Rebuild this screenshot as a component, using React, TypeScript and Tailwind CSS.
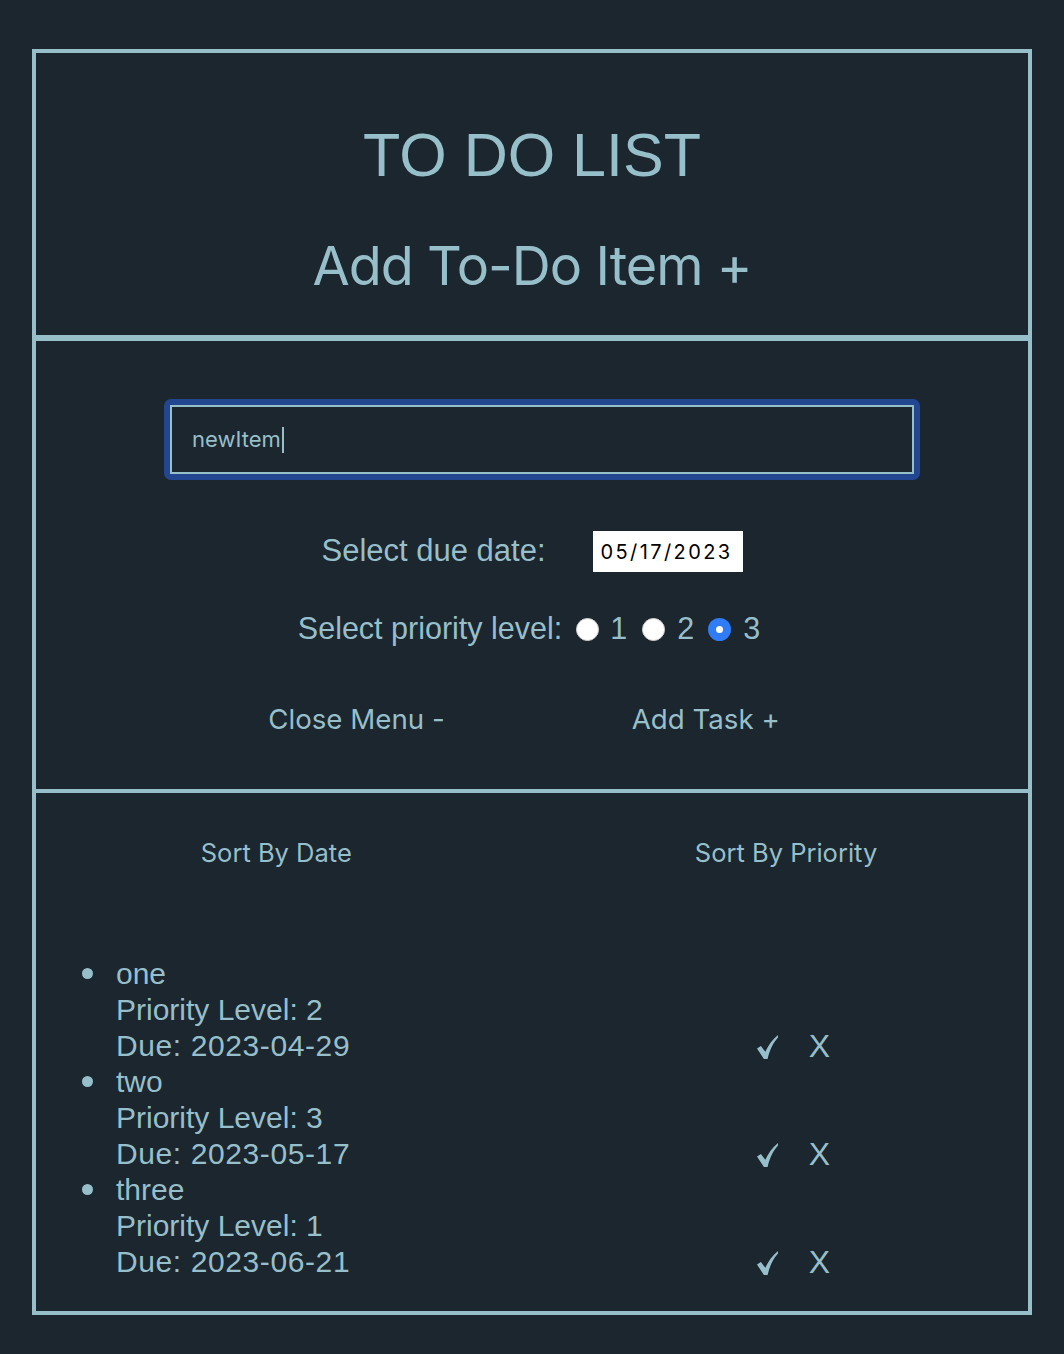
import React from 'react'

const tasks = [
  { name: 'one', priority: 2, due: '2023-04-29' },
  { name: 'two', priority: 3, due: '2023-05-17' },
  { name: 'three', priority: 1, due: '2023-06-21' },
]

function Radio({ checked = false, className = '' }: { checked?: boolean; className?: string }) {
  if (checked) {
    return (
      <span className={'inline-flex size-[23px] items-center justify-center rounded-full bg-[#2f7cf6] ' + className}>
        <span className="size-[7px] rounded-full bg-white" />
      </span>
    )
  }
  return <span className={'inline-block size-[23px] rounded-full border border-[#cfcfcf] bg-white ' + className} />
}

function Check() {
  return (
    <svg width="21" height="24" viewBox="0 0 21 24" className="fill-[#97bfca]">
      <path d="M0 13.6 L3.9 11 L8.3 16.8 C11.2 10.4 15.2 4.8 21 0 L21 2.6 C16.6 7.6 13 14 10.6 24 L6.9 24 Z" />
    </svg>
  )
}

export default function App() {
  return (
    <div className="min-h-screen bg-[#1b262f] pt-[49px] pb-[39px] font-['Liberation_Sans',Arial,sans-serif] text-[#97bfca]">
      <div className="mx-auto w-[1000px] border-4 border-[#97bfca]">
        {/* header */}
        <header className="border-b-[6px] border-[#97bfca] pt-[65px] pb-[37px] text-center">
          <h1 className="text-[61px] leading-[74px] font-normal">TO DO LIST</h1>
          <h2 className="mt-[42px] font-['Inter',sans-serif] text-[54px] leading-[64px] tracking-[-1px] font-normal">Add To-Do Item +</h2>
        </header>

        {/* add form */}
        <section className="border-b-4 border-[#97bfca] pt-[58px] pb-[49px]">
          <div className="ml-[128px] w-[756px] rounded-[7px] bg-[#22468f] p-[6px]">
            <div className="flex h-[69px] items-center border-2 border-[#97bfca] bg-[#1b262f] pl-[20px] font-['Inter',sans-serif] text-[22px]">
              newItem
              <span className="ml-[1px] inline-block h-[26px] w-[2px] bg-[#97bfca]" />
            </div>
          </div>

          <div className="mt-[51px] flex h-[41px] items-center justify-center gap-[47px]">
            <span className="text-[31px]">Select due date:</span>
            <div className="flex h-[41px] w-[150px] items-center bg-white pl-[8px] font-['Inter',sans-serif] text-[20px] tracking-[2.4px] text-black">
              05/17/2023
            </div>
          </div>

          <div className="mt-[37px] flex h-[40px] items-center justify-center pr-[6px] text-[30.5px]">
            <span>Select priority level:</span>
            <Radio className="ml-[14px]" />
            <span className="ml-[11px]">1</span>
            <Radio className="ml-[15px]" />
            <span className="ml-[12px]">2</span>
            <Radio checked className="ml-[14px]" />
            <span className="ml-[12px]">3</span>
          </div>

          <div className="mt-[51px] flex h-[40px] items-center justify-center gap-[187px] pr-[16px] font-['Inter',sans-serif] text-[27.7px]">
            <button>Close Menu -</button>
            <button>Add Task +</button>
          </div>
        </section>

        {/* list */}
        <section className="pt-[44px] pb-[31px]">
          <div className="flex h-[32px] items-center justify-center gap-[343px] pl-[14px] font-['Inter',sans-serif] text-[25.5px]">
            <button>Sort By Date</button>
            <button>Sort By Priority</button>
          </div>

          <ul className="mt-[87px]">
            {tasks.map((t) => (
              <li key={t.name} className="flex items-end text-[30px] leading-[36px]">
                <div className="w-[80px] self-start pt-[12px] pl-[46px]">
                  <span className="block size-[11px] rounded-full bg-[#97bfca]" />
                </div>
                <div>
                  <div>{t.name}</div>
                  <div>Priority Level: {t.priority}</div>
                  <div className="tracking-[0.6px]">Due: {t.due}</div>
                </div>
                <div className="mr-[198px] ml-auto flex h-[36px] items-center gap-[31px] text-[32px]">
                  <button className="pt-[2px]"><Check /></button>
                  <button>X</button>
                </div>
              </li>
            ))}
          </ul>
        </section>
      </div>
    </div>
  )
}
